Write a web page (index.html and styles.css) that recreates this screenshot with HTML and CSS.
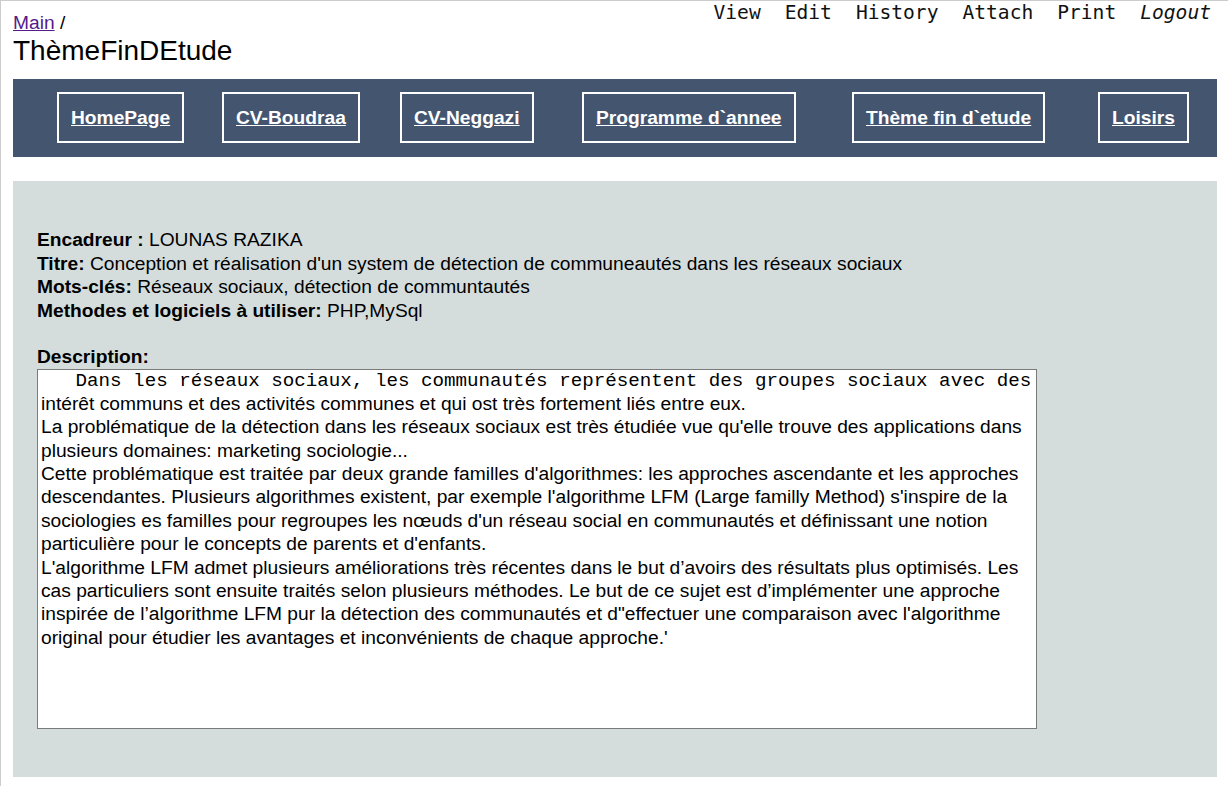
FILE: index.html
```html
<!DOCTYPE html>
<html lang="fr">
<head>
<meta charset="utf-8">
<title>ThèmeFinDEtude</title>
<link rel="stylesheet" href="styles.css">
</head>
<body>
<div class="page">
  <header class="header">
    <div class="heading">
      <div class="crumb"><a class="crumb-link" href="#">Main</a> /</div>
      <h1 class="title">ThèmeFinDEtude</h1>
    </div>
    <nav class="actions">
      <a class="action" href="#">View</a>
      <a class="action" href="#">Edit</a>
      <a class="action" href="#">History</a>
      <a class="action" href="#">Attach</a>
      <a class="action" href="#">Print</a>
      <a class="action action-logout" href="#">Logout</a>
    </nav>
  </header>

  <nav class="menu">
    <a class="menu-btn" href="#">HomePage</a>
    <a class="menu-btn" href="#">CV-Boudraa</a>
    <a class="menu-btn" href="#">CV-Neggazi</a>
    <a class="menu-btn" href="#">Programme d`annee</a>
    <a class="menu-btn" href="#">Thème fin d`etude</a>
    <a class="menu-btn" href="#">Loisirs</a>
  </nav>

  <main class="panel">
    <div class="line"><b>Encadreur :</b> LOUNAS RAZIKA</div>
    <div class="line"><b>Titre:</b> Conception et réalisation d'un system de détection de communeautés dans les réseaux sociaux</div>
    <div class="line"><b>Mots-clés:</b> Réseaux sociaux, détection de communtautés</div>
    <div class="line"><b>Methodes et logiciels à utiliser:</b> PHP,MySql</div>
    <div class="line blank"></div>
    <div class="line"><b>Description:</b></div>
    <div class="desc">
      <div class="mono">   Dans les réseaux sociaux, les communautés représentent des groupes sociaux avec des</div>
      <p class="para">intérêt communs et des activités communes et qui ost très fortement liés entre eux.</p>
      <p class="para">La problématique de la détection dans les réseaux sociaux est très étudiée vue qu'elle trouve des applications dans plusieurs domaines: marketing sociologie...</p>
      <p class="para">Cette problématique est traitée par deux grande familles d'algorithmes: les approches ascendante et les approches descendantes. Plusieurs algorithmes existent, par exemple l'algorithme LFM (Large familly Method) s'inspire de la sociologies es familles pour regroupes les nœuds d'un réseau social en communautés et définissant une notion particulière pour le concepts de parents et d'enfants.</p>
      <p class="para">L'algorithme LFM admet plusieurs améliorations très récentes dans le but d’avoirs des résultats plus optimisés. Les cas particuliers sont ensuite traités selon plusieurs méthodes. Le but de ce sujet est d’implémenter une approche inspirée de l’algorithme LFM pur la détection des communautés et d"effectuer une comparaison avec l'algorithme original pour étudier les avantages et inconvénients de chaque approche.'</p>
    </div>
  </main>
</div>
</body>
</html>
```

FILE: styles.css
```css
html, body {
  margin: 0;
  padding: 0;
  background: #ffffff;
}

body {
  font-family: "Liberation Sans", Arial, sans-serif;
  font-size: 19.2px;
  color: #000000;
}

.page {
  border-top: 1px solid #cccccc;
  border-left: 1px solid #cccccc;
  padding: 0 11px 10px 12px;
  min-height: 775px;
}

.header {
  display: flex;
  justify-content: space-between;
  align-items: flex-start;
}

.heading {
  padding-top: 10px;
}

.crumb {
  line-height: 23.4px;
}

.crumb-link {
  color: #551a8b;
  text-decoration: underline;
}

.title {
  margin: 0;
  font-size: 28px;
  font-weight: normal;
  line-height: 33px;
}

.actions {
  display: flex;
  gap: 24px;
  padding-top: 1px;
  margin-right: 6px;
  font-family: "DejaVu Sans Mono", monospace;
  font-size: 19.6px;
  line-height: 22px;
}

.action {
  color: #111111;
  text-decoration: none;
}

.action-logout {
  font-style: italic;
}

.menu {
  margin-top: 12px;
  background: #44556f;
  padding: 13px 0 14px 44px;
  display: grid;
  grid-template-columns: 165px 178px 182px 270px 246px auto;
  justify-items: start;
}

.menu-btn {
  display: block;
  border: 2px solid #ffffff;
  padding: 12px 12px;
  line-height: 23px;
  color: #ffffff;
  font-weight: bold;
  text-decoration: underline;
}

.panel {
  margin-top: 24px;
  background: #d4dddc;
  padding: 47px 24px 48px;
  line-height: 23.4px;
}

.line {
  min-height: 23.4px;
}

.desc {
  width: 992px;
  height: 354px;
  border: 1px solid #7a7a7a;
  padding: 1px 3px 3px;
  background: #ffffff;
  overflow: hidden;
}

.mono {
  font-family: "Liberation Mono", "Courier New", monospace;
  white-space: pre;
  line-height: 21px;
}

.para {
  margin: 0;
}
```
